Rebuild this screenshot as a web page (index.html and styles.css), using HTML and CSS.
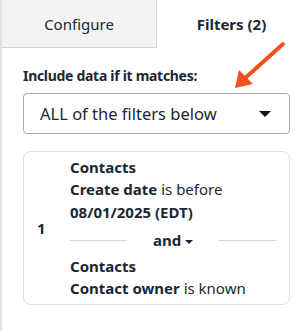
FILE: index.html
```html
<!DOCTYPE html>
<head>
  <meta charset="UTF-8">
  <meta name="viewport" content="width=device-width, initial-scale=1.0">
  <title>filters</title>
  <link rel="stylesheet" href="styles.css">
</head>
<body>
  <div class="panel">
    <!-- 顶部的两个标签 -->
    <div class="tabs">
      <div class="tab tab-off">Configure</div>
      <div class="tab tab-on">Filters (2)</div>
    </div>
    <div class="body">
      <div class="label">Include data if it matches:</div>
      <div class="select">
        <span>ALL of the filters below</span>
        <span class="caret"></span>
      </div>
      <div class="group">
        <div class="num">1</div>
        <div class="rules">
          <div class="b">Contacts</div>
          <div><span class="b">Create date</span> is before</div>
          <div class="b date">08/01/2025 (EDT)</div>
          <div class="and">
            <span class="rule-line"></span>
            <span class="and-text">and <span class="mini-caret"></span></span>
            <span class="rule-line"></span>
          </div>
          <div class="b">Contacts</div>
          <div><span class="b">Contact owner</span> is known</div>
        </div>
      </div>
    </div>
    <!-- 橙色的提示箭头 -->
    <svg class="arrow" width="60" height="52" viewBox="0 0 60 52">
      <line x1="52" y1="4" x2="12" y2="40" stroke="#f4511e" stroke-width="4" stroke-linecap="round"/>
      <polygon points="4,48 8,30 22,44" fill="#f4511e"/>
    </svg>
  </div>
</body>
</html>
```

FILE: styles.css
```css
body {
  margin: 0;
  font-family: "Noto Sans", "Liberation Sans", sans-serif;
  color: #1c2733;
}
.panel {
  position: relative;
  width: 304px;
  height: 331px;
  border-left: 2px solid #e3e3e3;
}
.tabs {
  display: flex;
  height: 48px;
}
.tab {
  display: flex;
  align-items: center;
  justify-content: center;
  font-size: 15px;
}
.tab-off {
  width: 154px;
  background: #f3f3f3;
  border-right: 1px solid #d6d6d6;
  border-bottom: 1px solid #d6d6d6;
}
.tab-on {
  flex: 1;
  font-weight: 700;
}
.body {
  padding: 18px 16px 0 21px;
}
.label {
  font-size: 14px;
  font-weight: 700;
  letter-spacing: -0.3px;
  line-height: 20px;
}
.select {
  display: flex;
  align-items: center;
  justify-content: space-between;
  height: 39px;
  margin-top: 7px;
  padding: 0 18px 0 16px;
  border: 1px solid #a9a9a9;
  border-radius: 4px;
  font-size: 16.5px;
}
.caret {
  width: 0;
  height: 0;
  border-left: 6px solid transparent;
  border-right: 6px solid transparent;
  border-top: 6px solid #111;
}
.group {
  display: flex;
  align-items: center;
  margin-top: 17px;
  padding: 4px 13px 5px 0;
  border: 1px solid #dedede;
  border-radius: 8px;
  font-size: 15px;
  line-height: 22px;
}
.num {
  width: 46px;
  padding-left: 13px;
  box-sizing: border-box;
  font-weight: 700;
}
.rules {
  flex: 1;
}
.b {
  font-weight: 700;
}
.date {
  margin-top: 1px;
}
.and {
  display: flex;
  align-items: center;
  margin: 6px 0 4px;
}
.rule-line {
  flex: 1;
  height: 1px;
  background: #d4d4d4;
}
.and-text {
  width: 92px;
  text-align: center;
  font-weight: 700;
}
.mini-caret {
  display: inline-block;
  vertical-align: middle;
  border-left: 4px solid transparent;
  border-right: 4px solid transparent;
  border-top: 4px solid #1c2733;
}
.arrow {
  position: absolute;
  left: 229px;
  top: 40px;
}
```
